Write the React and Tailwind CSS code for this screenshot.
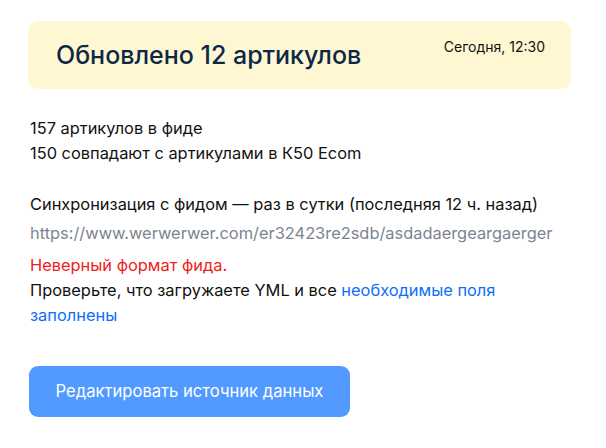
export default function App() {
  return (
    <div className="w-[606px] h-[448px] bg-white pl-[28px] pr-[35px] pt-[21px]" style={{ fontFamily: "Inter, 'Noto Sans', sans-serif" }}>
      <div className="h-[68px] rounded-[10px] bg-[#fef7d2] flex items-start justify-between pl-[28px] pr-[26px]">
        <div className="mt-[19px] text-[25px] leading-[30px] text-[#0d2847] font-medium">Обновлено 12 артикулов</div>
        <div className="mt-[16px] text-[14px] leading-[20px] text-[#111]">Сегодня, 12:30</div>
      </div>
      <div className="pl-[2px] mt-[27px] text-[16.4px] leading-[25px] text-[#111]">
        <div>157 артикулов в фиде</div>
        <div>150 совпадают с артикулами в К50 Ecom</div>
        <div className="mt-[26px]">Синхронизация с фидом — раз в сутки (последняя 12 ч. назад)</div>
        <div className="mt-[4px] text-[#7b8591]">https://www.werwerwer.com/er32423re2sdb/asdadaergeargaerger</div>
        <div className="mt-[7px] text-[#f0201b]">Неверный формат фида.</div>
        <div className="w-[480px]">
          Проверьте, что загружаете YML и все <span className="text-[#0d6ef7]">необходимые поля заполнены</span>
        </div>
      </div>
      <button className="mt-[38px] ml-[1px] w-[321px] h-[51px] rounded-[9px] bg-[#529aff] text-white text-[16.6px]">
        Редактировать источник данных
      </button>
    </div>
  );
}
